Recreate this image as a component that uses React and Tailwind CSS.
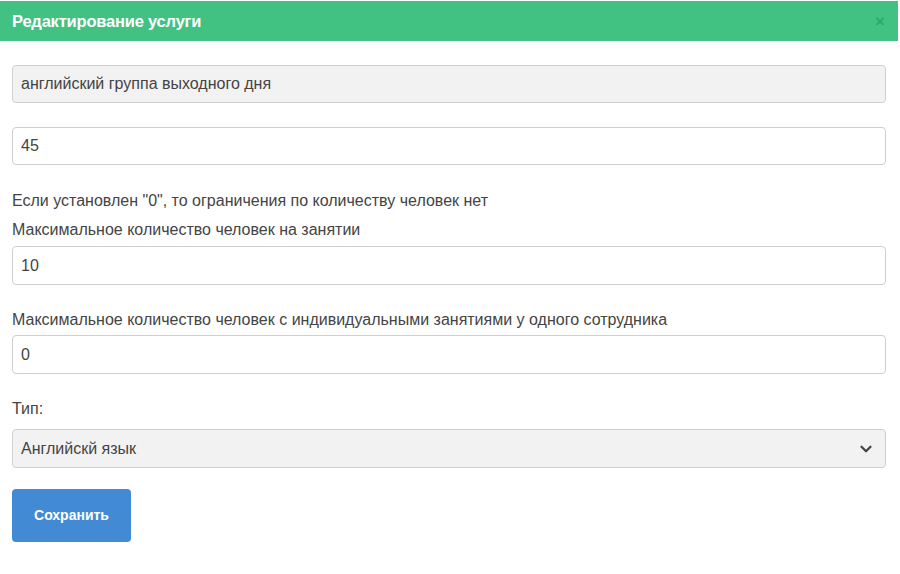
import { ChevronDown } from 'lucide-react'

const font = { fontFamily: '"Liberation Sans", Arial, sans-serif' }

function Field({ value, gray, tall }) {
  return (
    <div
      className={`${tall ? 'h-[39px]' : 'h-[38px]'} flex items-center px-2 rounded border border-[#cfcfcf] text-[16px] text-[#444] ${gray ? 'bg-[#f2f2f2]' : 'bg-white'}`}
    >
      {value}
    </div>
  )
}

export default function App() {
  return (
    <div className="w-[900px] h-[574px] bg-white" style={font}>
      {/* Header */}
      <div className="h-[40px] mt-[1px] mr-[2px] bg-[#41c282] flex items-center justify-between pl-3 pr-[13px]">
        <h1 className="text-white font-bold text-[16.5px] tracking-[-0.2px]">Редактирование услуги</h1>
        <span className="text-[#2ea86a] text-[17px] font-bold leading-none">×</span>
      </div>

      <div className="pl-3 pr-[14px] pt-6">
        <Field value="английский группа выходного дня" gray />

        <div className="mt-[24px]">
          <Field value="45" />
        </div>

        <p className="mt-[26px] text-[16px] text-[#444] leading-[20px]">
          Если установлен "0", то ограничения по количеству человек нет
        </p>
        <p className="mt-[9px] text-[16px] text-[#444] leading-[20px]">
          Максимальное количество человек на занятии
        </p>
        <div className="mt-[6px]">
          <Field value="10" tall />
        </div>

        <p className="mt-[25px] text-[16px] text-[#444] leading-[20px]">
          Максимальное количество человек с индивидуальными занятиями у одного сотрудника
        </p>
        <div className="mt-[5px]">
          <Field value="0" tall />
        </div>

        <p className="mt-[25px] text-[16px] text-[#444] leading-[20px]">Тип:</p>
        <div className="mt-[10px] h-[39px] flex items-center justify-between pl-2 pr-[10px] rounded border border-[#cfcfcf] bg-[#f2f2f2] text-[16px] text-[#444]">
          <span>Английскй язык</span>
          <ChevronDown size={18} strokeWidth={3} className="text-[#444]" />
        </div>

        <button className="mt-[21px] w-[119px] h-[53px] rounded bg-[#428bd4] text-white font-bold text-[14px]">
          Сохранить
        </button>
      </div>
    </div>
  )
}
